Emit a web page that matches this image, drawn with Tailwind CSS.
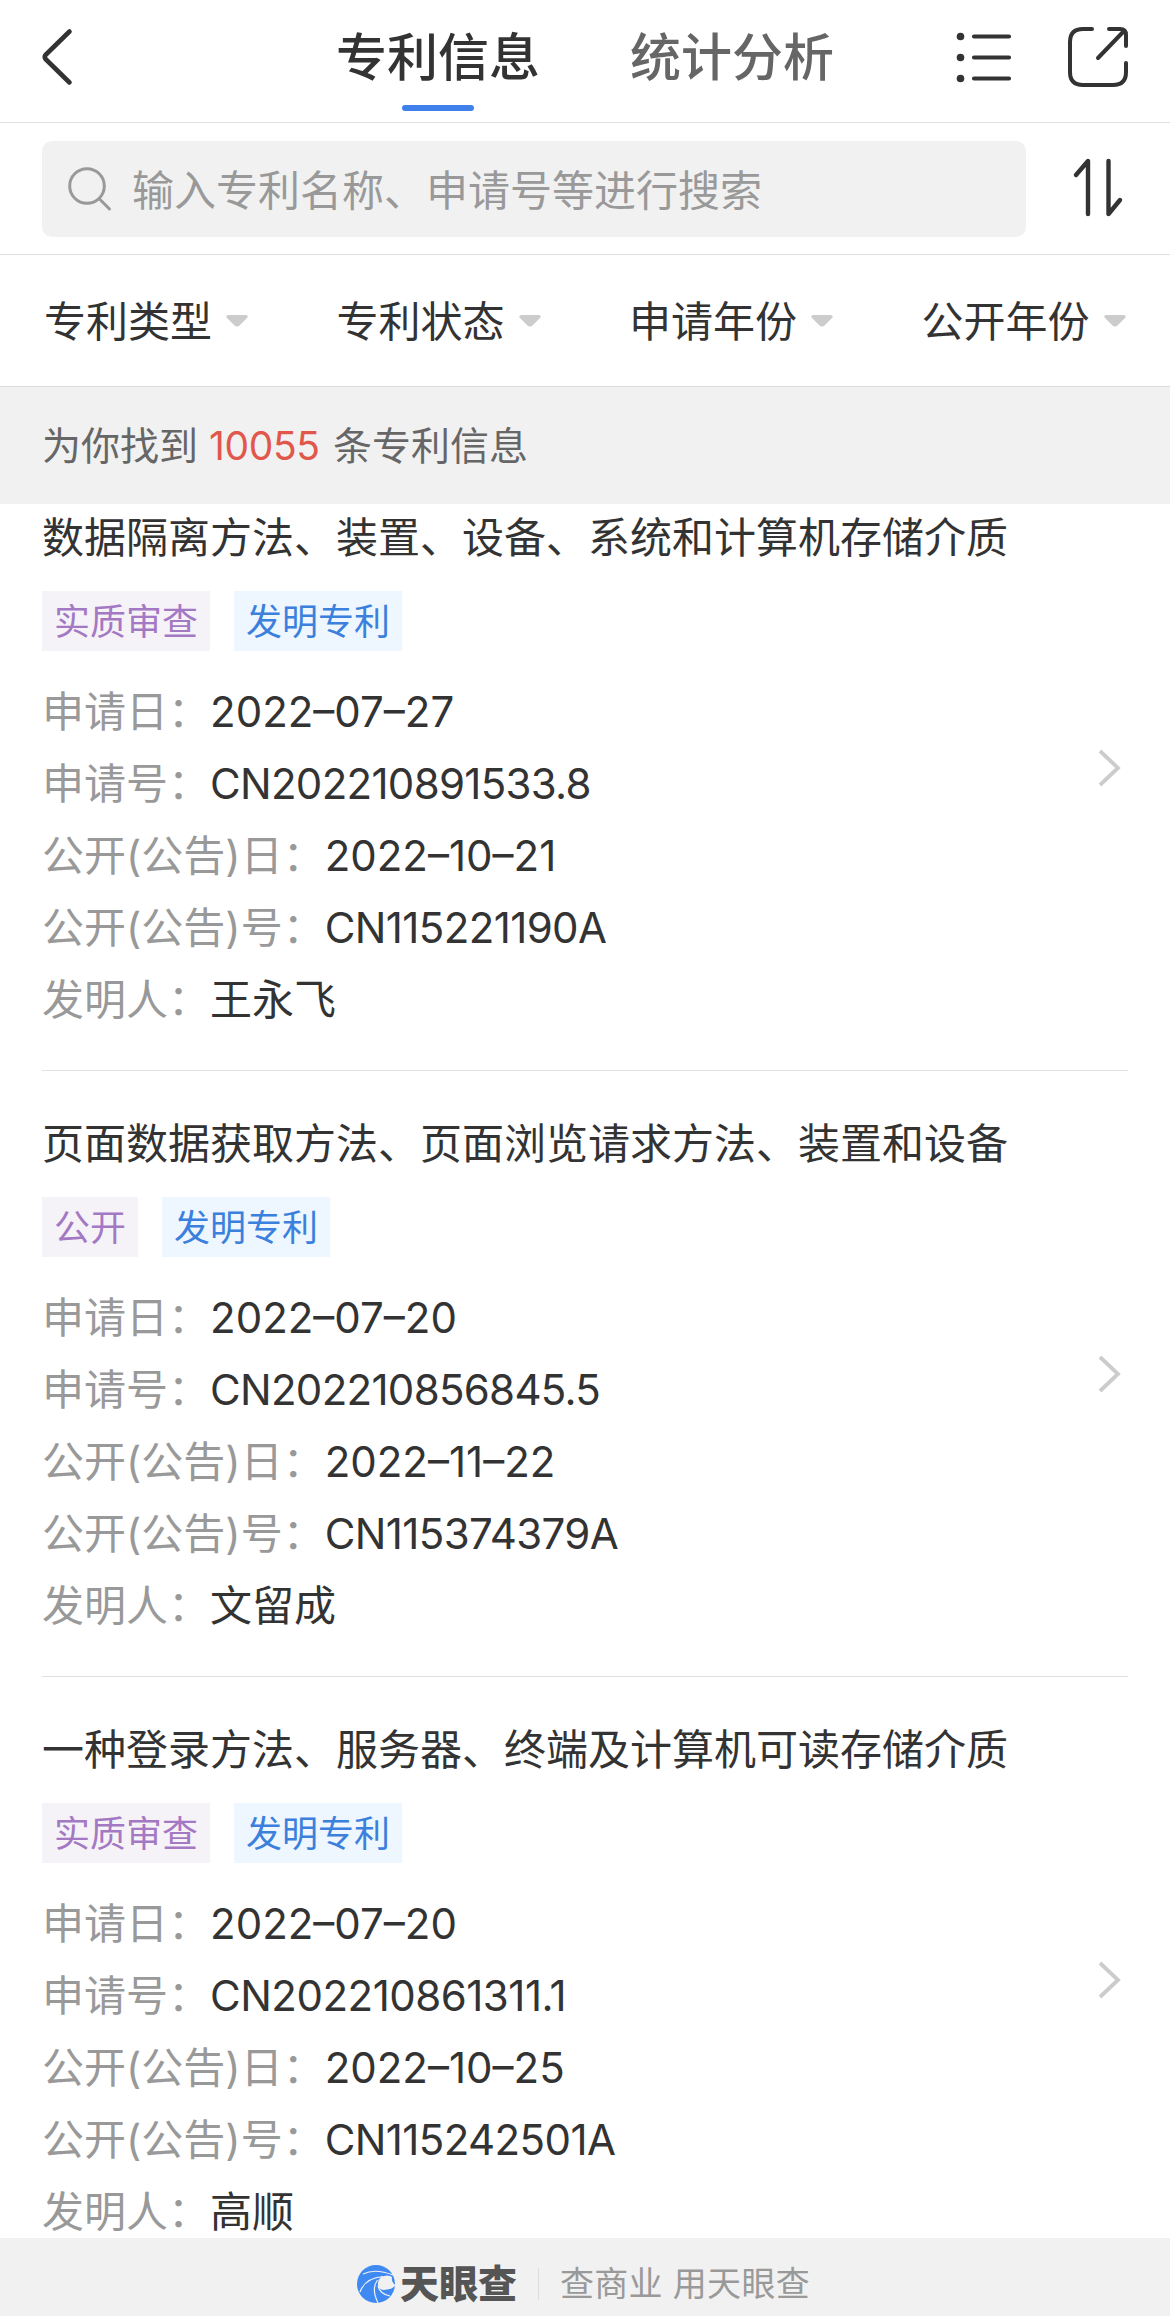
<!DOCTYPE html>
<html lang="zh-CN">

<head>
    <meta charset="UTF-8">
    <meta name="viewport" content="width=device-width, initial-scale=1.0">
    <title>专利信息</title>

    <script src="https://cdn.jsdelivr.net/npm/@tailwindcss/browser@4"></script>
</head>

<body class="bg-white">
    <div class="w-[1170px] h-[2316px] flex flex-col overflow-hidden text-[#333333] font-normal font-[Inter,'Noto_Sans_CJK_SC',sans-serif]">

        <!-- header -->
        <header class="h-[123px] shrink-0 flex border-b border-[#dfdfdf]">
            <svg class="ml-9 mt-6 w-10 h-16 shrink-0" viewBox="36 24 40 64" fill="none" stroke="#333" stroke-width="4.6" stroke-linecap="round" stroke-linejoin="round">
                <path d="M69.5 31.5L45.5 55Q44 57 45.5 59L69.5 82.5" />
            </svg>
            <nav class="ml-[260px] flex gap-[90px] text-[51px] font-medium leading-[76px]">
                <a class="w-[204px] pt-[20px] flex flex-col items-center">
                    <span>专利信息</span>
                    <span class="mt-[9px] w-[72px] h-[6px] rounded-full bg-[#3f80ea]"></span>
                </a>
                <a class="w-[204px] pt-[20px] text-[#666666]">统计分析</a>
            </nav>
            <svg class="ml-[119px] mt-6 w-16 h-16 shrink-0" viewBox="953 24 64 64" fill="none" stroke="#333" stroke-width="4.2" stroke-linecap="round">
                <path d="M974 36.5h35M974 57.5h35M974 78.5h35" />
                <g fill="#333" stroke="none">
                    <circle cx="960.5" cy="36.5" r="3.8" />
                    <circle cx="960.5" cy="57.5" r="3.8" />
                    <circle cx="960.5" cy="78.5" r="3.8" />
                </g>
            </svg>
            <svg class="ml-[47px] mt-6 w-[66px] h-[66px] shrink-0" viewBox="1064 24 66 66" fill="none" stroke="#333" stroke-width="4" stroke-linecap="round" stroke-linejoin="round">
                <path d="M1092 29h-9q-13 0-13 13v30q0 13 13 13h30q13 0 13-13v-9M1109 29h11q6 0 6 6v11M1098 58L1124 31" />
            </svg>
        </header>

        <!-- search -->
        <div class="h-[132px] shrink-0 flex border-b border-[#dfdfdf] pt-[18px] pl-[42px]">
            <div class="w-[984px] h-24 rounded-[10px] bg-[#f1f1f1] flex items-center pl-6 text-[42px] text-[#999999]">
                <svg class="w-12 h-12" viewBox="66 163 48 48" fill="none" stroke="#999" stroke-width="3" stroke-linecap="round">
                    <circle cx="87" cy="184" r="17.3" />
                    <path d="M99.5 197L109.5 207" />
                </svg>
                <span class="ml-[18px] pt-[2px]">输入专利名称、申请号等进行搜索</span>
            </div>
            <svg class="ml-[44px] mt-[14px] w-14 h-16" viewBox="1070 155 56 64" fill="none" stroke="#333" stroke-width="4.4" stroke-linecap="round" stroke-linejoin="round">
                <path d="M1076 175L1088 161V214M1108.500 161V214L1120 200" />
            </svg>
        </div>

        <!-- filters -->
        <div class="h-[132px] shrink-0 grid grid-cols-4 items-center border-b border-[#dcdcdc] text-[42px]">
            <div class="flex items-center pl-[44px]"><span class="pt-[2px]">专利类型</span>
                <svg class="ml-[14px] w-[22px] h-3" viewBox="0 0 22 12" fill="#ccc"><path d="M2 0h18q3 1 1 3l-7 7q-3 3-6 0l-7-7q-2-2 1-3z" /></svg>
            </div>
            <div class="flex items-center pl-[44px]"><span class="pt-[2px]">专利状态</span>
                <svg class="ml-[14px] w-[22px] h-3" viewBox="0 0 22 12" fill="#ccc"><path d="M2 0h18q3 1 1 3l-7 7q-3 3-6 0l-7-7q-2-2 1-3z" /></svg>
            </div>
            <div class="flex items-center pl-[44px]"><span class="pt-[2px]">申请年份</span>
                <svg class="ml-[14px] w-[22px] h-3" viewBox="0 0 22 12" fill="#ccc"><path d="M2 0h18q3 1 1 3l-7 7q-3 3-6 0l-7-7q-2-2 1-3z" /></svg>
            </div>
            <div class="flex items-center pl-[44px]"><span class="pt-[2px]">公开年份</span>
                <svg class="ml-[14px] w-[22px] h-3" viewBox="0 0 22 12" fill="#ccc"><path d="M2 0h18q3 1 1 3l-7 7q-3 3-6 0l-7-7q-2-2 1-3z" /></svg>
            </div>
        </div>

        <div class="h-[117px] shrink-0 flex items-center bg-[#f1f1f1] pl-[42px] pt-px text-[39px] text-[#666666]">
            <span>为你找到</span>
            <span class="ml-[11px] w-[110px] tracking-[-0.4px] text-[#e2574c]">10055</span>
            <span class="ml-[14px]">条专利信息</span>
        </div>

        <!-- patent list, scrolled a little under the count bar -->
        <main class="h-[1734px] shrink-0 overflow-hidden pl-[42px] pr-[42px]">
            <div class="-mt-[39px] h-[606px] flex items-center justify-between border-b border-[#e0e0e0]">
                <div class="h-full pt-[43px] text-[42px]">
                    <h2 class="leading-[60px]">数据隔离方法、装置、设备、系统和计算机存储介质</h2>
                    <div class="mt-[23px] mb-[25px] flex gap-6 text-[36px] leading-[62px] h-[60px]">
                        <span class="px-3 bg-[#f6f3f8] text-[#a479c4]">实质审查</span>
                        <span class="px-3 bg-[#eef6ff] text-[#3a80dc]">发明专利</span>
                    </div>
                    <p class="leading-[72px]"><span class="text-[#999999]">申请日：</span><span>2022–07–27</span></p>
                    <p class="leading-[72px]"><span class="text-[#999999]">申请号：</span><span class="tracking-[-0.7px]">CN202210891533.8</span></p>
                    <p class="leading-[72px]"><span class="text-[#999999]">公开(公告)日：</span><span>2022–10–21</span></p>
                    <p class="leading-[72px]"><span class="text-[#999999]">公开(公告)号：</span><span class="tracking-[-0.6px]">CN115221190A</span></p>
                    <p class="leading-[72px]"><span class="text-[#999999]">发明人：</span>王永飞</p>
                </div>
                <svg class="mr-[6px] w-6 h-10" viewBox="0 0 24 40" fill="none" stroke="#ccc" stroke-width="3.8"><path d="M2 3l18 17L2 37" /></svg>
            </div>

            <div class="h-[606px] flex items-center justify-between border-b border-[#e0e0e0]">
                <div class="h-full pt-[43px] text-[42px]">
                    <h2 class="leading-[60px]">页面数据获取方法、页面浏览请求方法、装置和设备</h2>
                    <div class="mt-[23px] mb-[25px] flex gap-6 text-[36px] leading-[62px] h-[60px]">
                        <span class="px-3 bg-[#f6f3f8] text-[#a479c4]">公开</span>
                        <span class="px-3 bg-[#eef6ff] text-[#3a80dc]">发明专利</span>
                    </div>
                    <p class="leading-[72px]"><span class="text-[#999999]">申请日：</span><span>2022–07–20</span></p>
                    <p class="leading-[72px]"><span class="text-[#999999]">申请号：</span><span class="tracking-[-0.7px]">CN202210856845.5</span></p>
                    <p class="leading-[72px]"><span class="text-[#999999]">公开(公告)日：</span><span>2022–11–22</span></p>
                    <p class="leading-[72px]"><span class="text-[#999999]">公开(公告)号：</span><span class="tracking-[-0.6px]">CN115374379A</span></p>
                    <p class="leading-[72px]"><span class="text-[#999999]">发明人：</span>文留成</p>
                </div>
                <svg class="mr-[6px] w-6 h-10" viewBox="0 0 24 40" fill="none" stroke="#ccc" stroke-width="3.8"><path d="M2 3l18 17L2 37" /></svg>
            </div>

            <div class="h-[606px] flex items-center justify-between">
                <div class="h-full pt-[43px] text-[42px]">
                    <h2 class="leading-[60px]">一种登录方法、服务器、终端及计算机可读存储介质</h2>
                    <div class="mt-[23px] mb-[25px] flex gap-6 text-[36px] leading-[62px] h-[60px]">
                        <span class="px-3 bg-[#f6f3f8] text-[#a479c4]">实质审查</span>
                        <span class="px-3 bg-[#eef6ff] text-[#3a80dc]">发明专利</span>
                    </div>
                    <p class="leading-[72px]"><span class="text-[#999999]">申请日：</span><span>2022–07–20</span></p>
                    <p class="leading-[72px]"><span class="text-[#999999]">申请号：</span><span class="tracking-[-0.5px]">CN202210861311.1</span></p>
                    <p class="leading-[72px]"><span class="text-[#999999]">公开(公告)日：</span><span>2022–10–25</span></p>
                    <p class="leading-[72px]"><span class="text-[#999999]">公开(公告)号：</span><span class="tracking-[-0.6px]">CN115242501A</span></p>
                    <p class="leading-[72px]"><span class="text-[#999999]">发明人：</span>高顺</p>
                </div>
                <svg class="mr-[6px] w-6 h-10" viewBox="0 0 24 40" fill="none" stroke="#ccc" stroke-width="3.8"><path d="M2 3l18 17L2 37" /></svg>
            </div>
        </main>

        <!-- brand bar -->
        <footer class="h-[78px] shrink-0 flex items-center bg-[#f1f1f1] pl-[357px] pt-[13px]">
            <svg class="w-[38px] h-[38px]" viewBox="0 0 38 38" fill="none">
                <circle cx="19" cy="19" r="19" fill="#3f8af2" />
                <!-- eye and the wave lines round it -->
                <path d="M24 12Q31 9 35 12Q34 17 38.500 20Q36 24 30 24.500Q24 26 21.500 22Q19.500 16 24 12z" fill="#f1f1f1" />
                <g stroke="#f1f1f1" stroke-width="1.2">
                    <path d="M3 27Q8 13 26 11.500M6 9Q18 3 36 10" />
                    <path d="M20.500 15Q14 24 21 38M21 21Q23 29 33 31" />
                </g>
            </svg>
            <span class="ml-[5px] text-[39px] leading-[60px] font-black text-[#555555]">天眼查</span>
            <span class="ml-[21px] w-px h-8 bg-[#dddddd]"></span>
            <span class="ml-[21px] text-[34px] leading-[60px] tracking-[0.3px] text-[#999999]">查商业 用天眼查</span>
        </footer>
    </div>
</body>

</html>
